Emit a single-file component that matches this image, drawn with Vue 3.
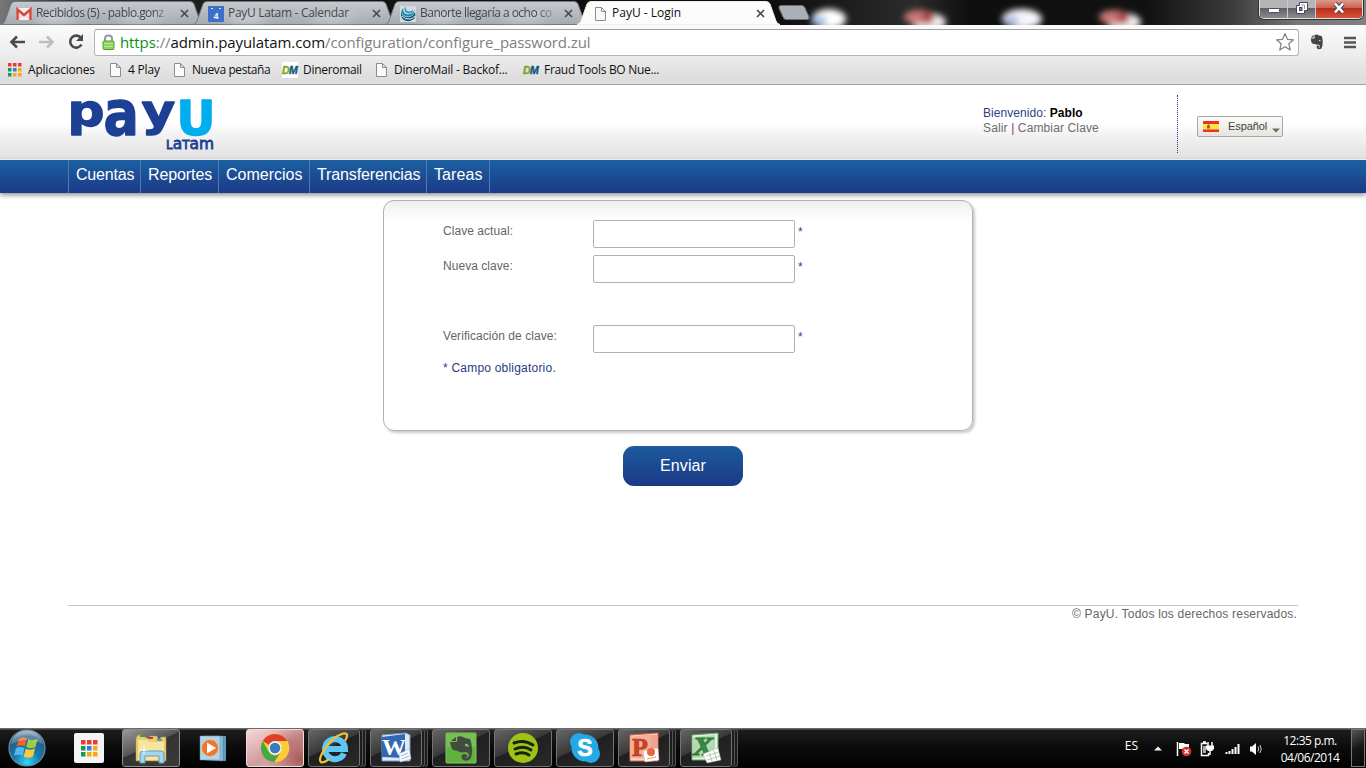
<script setup>
import { ref } from 'vue'

const tabs = [
  { title: 'Recibidos (5) - pablo.gonz', icon: 'gmail', cls: 't0' },
  { title: 'PayU Latam - Calendar', icon: 'calendar', cls: 't1' },
  { title: 'Banorte llegaría a ocho co', icon: 'globe', cls: 't2' },
  { title: 'PayU - Login', icon: 'page', cls: 't3', active: true },
]
const bookmarks = [
  { label: 'Aplicaciones', icon: 'apps', cls: 'b0' },
  { label: '4 Play', icon: 'page', cls: 'b1' },
  { label: 'Nueva pestaña', icon: 'page', cls: 'b2' },
  { label: 'Dineromail', icon: 'dmw', cls: 'b3' },
  { label: 'DineroMail - Backof...', icon: 'page', cls: 'b4' },
  { label: 'Fraud Tools BO Nue...', icon: 'dm', cls: 'b5' },
]
const menu = [
  { label: 'Cuentas', cls: 'm0' },
  { label: 'Reportes', cls: 'm1' },
  { label: 'Comercios', cls: 'm2' },
  { label: 'Transferencias', cls: 'm3' },
  { label: 'Tareas', cls: 'm4' },
]
const fields = ref([
  { label: 'Clave actual:', value: '' },
  { label: 'Nueva clave:', value: '' },
  { label: 'Verificación de clave:', value: '', spaced: true },
])
const tasks = [
  { id: 'launcher' },
  { id: 'explorer', open: true, lit: true },
  { id: 'player' },
  { id: 'chrome', open: true, active: true },
  { id: 'ie', open: true, stack: true },
  { id: 'word', open: true, stack: true },
  { id: 'evernote', open: true },
  { id: 'spotify', open: true },
  { id: 'skype', open: true },
  { id: 'ppt', open: true, stack: true },
  { id: 'excel', open: true, stack: true },
]
const dots = ['#ea3d2f', '#ea3d2f', '#ea3d2f', '#169b56', '#2a7de1', '#f6a912', '#169b56', '#f6a912', '#f6a912']
</script>

<template>
  <div class="screen">
    <div class="titlebar">
      <svg class="aero" width="1366" height="25" viewBox="0 0 1366 25">
        <defs>
          <linearGradient id="glass" x1="0" x2="1">
            <stop offset="0" stop-color="#777" /><stop offset=".05" stop-color="#333" /><stop offset=".2" stop-color="#141414" />
            <stop offset=".56" stop-color="#0c0c0c" /><stop offset=".67" stop-color="#2b2b2b" /><stop offset=".71" stop-color="#0e0e0e" />
            <stop offset=".84" stop-color="#111" /><stop offset=".9" stop-color="#3a3a3a" /><stop offset=".95" stop-color="#777" /><stop offset="1" stop-color="#808080" />
          </linearGradient>
          <filter id="soft" x="-30%" y="-50%" width="160%" height="200%"><feGaussianBlur stdDeviation="3" /></filter>
        </defs>
        <rect width="1366" height="25" fill="url(#glass)" />
        <g filter="url(#soft)">
          <ellipse cx="829" cy="19" rx="17" ry="10" fill="#fff" /><ellipse cx="819" cy="21" rx="8" ry="5" fill="#9dbfe4" />
          <ellipse cx="929" cy="22" rx="17" ry="9" fill="#f2eeee" /><ellipse cx="919" cy="17" rx="15" ry="7" fill="#c97878" /><ellipse cx="928" cy="18" rx="6" ry="6" fill="#b04040" />
          <ellipse cx="1022" cy="19" rx="20" ry="10" fill="#f5f6fb" /><ellipse cx="1011" cy="21" rx="8" ry="5" fill="#a9b6dd" />
          <ellipse cx="1124" cy="22" rx="17" ry="9" fill="#f2eeee" /><ellipse cx="1114" cy="17" rx="15" ry="7" fill="#c97878" /><ellipse cx="1123" cy="18" rx="6" ry="6" fill="#b04040" />
        </g>
      </svg>
      <div class="tabs">
        <div v-for="t in tabs" :key="t.title" class="tab" :class="[{ active: t.active }, t.cls]">
          <svg class="tabshape" width="205" height="25" viewBox="0 0 205 25">
            <defs>
              <linearGradient id="tg" x2="0" y2="1"><stop offset="0" stop-color="#c5cad0" /><stop offset="1" stop-color="#a6abb2" /></linearGradient>
              <filter id="tb"><feGaussianBlur stdDeviation="6" /></filter>
            </defs>
            <path d="M1 24.5Q4 24 5 21L11 4Q12 1.500 15 1.500H190Q193 1.500 194 4L200 21Q201 24 204 24.500Z" :fill="t.active ? '#fcfcfc' : 'url(#tg)'" :stroke="t.active ? '#eee' : '#74787e'" />
            <g v-if="!t.active" filter="url(#tb)" opacity=".45"><ellipse cx="55" cy="18" rx="20" ry="5" fill="#fff" /><ellipse cx="140" cy="17" rx="22" ry="5" fill="#eff4fa" /></g>
          </svg>
          <svg class="fav" width="16" height="16" viewBox="0 0 16 16">
            <g v-if="t.icon === 'gmail'"><rect y="2" width="16" height="12" rx="1" fill="#f4eeee" /><path d="M1.500 14V3.500L8 9L14.500 3.500V14" fill="none" stroke="#d54b3f" stroke-width="2.600" /><path d="M3 13L6 9M13 13L10 9" stroke="#ccc" /></g>
            <g v-else-if="t.icon === 'calendar'"><rect width="16" height="16" rx="1" fill="#3d6fc8" /><path d="M3 2.500H5M11 2.500H13" stroke="#dce7fa" /><text x="8" y="12.500" text-anchor="middle" font-size="9" font-weight="700" font-family="Open Sans" fill="#e5eefb">4</text></g>
            <g v-else-if="t.icon === 'globe'"><rect width="16" height="16" fill="#d4dade" /><path d="M1 5Q2 11 8 11Q13 11 15 6Q17 13 10 15Q2 16 1 9Z" fill="#165d7c" /><path d="M3 2Q3 8 8 8.500Q13 8 14.500 4Q14 10.500 8 10.500Q2 10 1.500 5Z" fill="#1c87b4" /><path d="M6 1Q5 5 9 5.500Q13 5 13 3Q14 7 9 7.500Q4 7 4.500 2Z" fill="#2b9cc8" /><path d="M2 10Q5 13.500 10 13Q13 12.500 15 10" fill="none" stroke="#d8e8ee" /></g>
            <path v-else d="M3.500 1.500H9.500L13.500 5.500V14.500H3.500ZM9.500 1.500V5.500H13.500" fill="#f8f8f8" stroke="#8d8d8d" />
          </svg>
          <span class="tabtitle">{{ t.title }}</span>
          <svg class="x" width="9" height="9" viewBox="0 0 9 9"><path d="M1 1L8 8M8 1L1 8" stroke="#4c4c4c" stroke-width="1.700" /></svg>
        </div>
        <svg class="newtab" width="34" height="16" viewBox="0 0 34 16"><path d="M4 .5H25Q27 .5 28 3L32 12Q32.500 14.500 30 14.500H9Q7 14.500 6 12L2 3Q1.500 .5 4 .5Z" fill="#aab0b8" stroke="#6c7075" /></svg>
      </div>
      <div class="winbtns">
        <span class="wb min"><svg width="14" height="12"><rect x="1.500" y="6.500" width="11" height="4" rx="1" fill="#fff" stroke="#4d5065" /></svg></span>
        <span class="wb"><svg width="14" height="14"><path d="M4.500 1.500H12.500V9.500H9.500V12.500H1.500V4.500H4.500Z" fill="#fff" stroke="#454860" /><rect x="4.500" y="6.500" width="2.500" height="3" fill="#7d7f8d" stroke="#454860" /><path d="M6 4H9.500V8" fill="none" stroke="#999" /></svg></span>
        <span class="wb close"><svg width="14" height="12" viewBox="0 0 14 12"><path d="M3 1.500L11 10.500M11 1.500L3 10.500" stroke="#4c4353" stroke-width="4.500" /><path d="M3 1.500L11 10.500M11 1.500L3 10.500" stroke="#fff" stroke-width="2.600" /></svg></span>
      </div>
    </div>

    <div class="chrome">
      <div class="toolbar">
        <svg class="back" width="18" height="16" viewBox="0 0 18 16"><path d="M17 8H4M9 2.500L3.500 8L9 13.500" fill="none" stroke="#4b4b4b" stroke-width="2.600" /></svg>
        <svg class="fwd" width="18" height="16" viewBox="0 0 18 16"><path d="M1 8H14M9 2.500L14.500 8L9 13.500" fill="none" stroke="#bebebe" stroke-width="2.600" /></svg>
        <svg class="reload" width="18" height="18" viewBox="0 0 18 18"><path d="M14 5A6 6 0 1 0 14.500 11.500" fill="none" stroke="#4b4b4b" stroke-width="2.600" /><path d="M16 1V8H9Z" fill="#4b4b4b" /></svg>
        <div class="omnibox">
          <svg class="lock" width="13" height="17" viewBox="0 0 13 17"><path d="M3 8V4.500Q3 1.500 6.500 1.500Q10 1.500 10 4.500V8" fill="none" stroke="#999" stroke-width="2" /><rect x="1" y="7" width="11" height="8.500" rx="1" fill="#8ed35c" stroke="#52a032" /><path d="M2 9.500H11M2 12.500H11" stroke="#b4e78f" /></svg>
          <span class="url"><i>https</i>://<b>admin.payulatam.com</b>/configuration/configure_password.zul</span>
          <svg class="star" width="20" height="20" viewBox="0 0 20 20"><path d="M10 1.500L12.400 7.300L18.500 7.800L13.800 11.800L15.300 18L10 14.700L4.700 18L6.200 11.800L1.500 7.800L7.600 7.300Z" fill="#fff" stroke="#808080" stroke-width="1.200" stroke-linejoin="round" /></svg>
        </div>
        <svg class="ever" width="14" height="16" viewBox="0 0 14 16"><path d="M4.500 1Q7 0 9 1.500L11.500 2Q12.500 3 12.700 7Q12.900 12 11.500 14.500Q9 16 7 14.500Q5.800 12.600 7.500 11.500L9.400 11.800V13H8.300Q9 14 10 13.200Q10.500 11 8.500 10.500Q6.500 11 5.500 10.300L2.200 9.500Q1 8 .8 4.500H4.500Z" fill="#444" /><path d="M.8 3.600L3.700 .7V3.600Z" fill="#555" /><path d="M9 6Q10.500 5.500 10.800 7.300L9 7Z" fill="#ddd" /></svg>
        <svg class="burger" width="14" height="13"><path d="M1 2H13M1 6.500H13M1 11H13" stroke="#555" stroke-width="2.400" /></svg>
      </div>
      <div class="bookmarks">
        <div v-for="b in bookmarks" :key="b.label" class="bm" :class="b.cls">
          <svg width="16" height="16" viewBox="0 0 16 16">
            <g v-if="b.icon === 'apps'"><rect v-for="(c, i) in dots" :key="i" :x="1 + (i % 3) * 5" :y="1 + Math.floor(i / 3) * 5" width="3.500" height="3.500" :fill="c" /></g>
            <path v-else-if="b.icon === 'page'" d="M3.500 1.500H9.500L13.500 5.500V14.500H3.500ZM9.500 1.500V5.500H13.500" fill="#fbfbfb" stroke="#8d8d8d" />
            <g v-else><rect v-if="b.icon === 'dmw'" width="16" height="16" fill="#fff" /><text y="12" font-family="Liberation Sans" font-size="10.500" font-weight="700" font-style="italic" stroke-width=".4"><tspan fill="#79a820" stroke="#79a820">D</tspan><tspan x="7" fill="#19537a" stroke="#19537a">M</tspan></text></g>
          </svg>
          <span>{{ b.label }}</span>
        </div>
      </div>
    </div>

    <main class="page">
      <header class="head">
        <div class="wrap headrow">
          <svg class="logo" width="150" height="60" viewBox="0 0 150 60" font-family="DejaVu Sans" font-weight="700" fill="#1d3f94">
            <g stroke="#1d3f94" stroke-width="1.400" stroke-linejoin="round">
              <text transform="translate(-1.500 31.500) scale(1.100 .96)" font-size="47">p</text>
              <text transform="translate(34.500 40.500) scale(.82 .96)" font-size="64">a</text>
              <text transform="translate(72.500 31.500) scale(1.100 .96)" font-size="47">y</text>
              <text transform="translate(107.500 40.500) scale(.98 .98)" font-size="49" fill="#00aeef" stroke="#00aeef">U</text>
            </g>
            <text x="97" y="55" font-size="12.500" textLength="48" lengthAdjust="spacingAndGlyphs" font-weight="400" stroke="#1d3f94" stroke-width=".8">L<tspan font-size="16">a</tspan>T<tspan font-size="16">am</tspan></text>
          </svg>
          <div class="user">
            <p>Bienvenido: <b>Pablo</b></p>
            <p class="links"><a>Salir</a> <em>|</em> <a>Cambiar Clave</a></p>
          </div>
          <div class="dots"></div>
          <button class="lang">
            <svg width="16" height="11" viewBox="0 0 16 11"><rect width="16" height="11" fill="#e8322c" /><rect y="3" width="16" height="5.500" fill="#fbe33a" /><path d="M4 7.500V5L5.500 3L7 5V7.500Z" fill="#b05a2a" /></svg>
            <span>Español</span>
            <svg class="caret" width="8" height="5"><path d="M0 .5H8L4 4.500Z" fill="#6d6d5e" /></svg>
          </button>
        </div>
      </header>
      <nav class="nav"><div class="wrap navrow"><a v-for="m in menu" :key="m.label" :class="m.cls">{{ m.label }}</a></div></nav>

      <section class="card">
        <div v-for="f in fields" :key="f.label" class="field" :class="{ spaced: f.spaced }">
          <label>{{ f.label }}</label><input v-model="f.value" type="password" /><span>*</span>
        </div>
        <p class="note">* Campo obligatorio.</p>
      </section>
      <button class="send">Enviar</button>
      <footer class="wrap foot"><span>© PayU. Todos los derechos reservados.</span></footer>
    </main>

    <div class="taskbar">
      <svg class="start" width="42" height="40" viewBox="0 0 42 40">
        <defs><radialGradient id="orb" cx=".5" cy=".9" r=".9"><stop offset="0" stop-color="#35d7f5" /><stop offset=".4" stop-color="#147bad" /><stop offset=".8" stop-color="#2a5a84" /><stop offset="1" stop-color="#b8cfdf" /></radialGradient></defs>
        <circle cx="21" cy="20" r="18" fill="url(#orb)" stroke="#678ba3" stroke-width="1.200" />
        <path d="M13 11Q17 8 21 10.500L19 18.500Q15 16 10.500 18.500Z" fill="#f0622b" /><path d="M22.200 11.200Q26.500 13.500 31.500 11L29.500 19Q24.500 21.500 20.200 19Z" fill="#9ccf45" />
        <path d="M10 20.200Q14.500 17.700 18.500 20.200L16.500 28Q12.500 25.500 8 28Z" fill="#55b7ea" /><path d="M19.800 20.800Q24 23 29 20.600L27 28.500Q22 31 17.700 28.600Z" fill="#fdca3b" />
        <path d="M5 16Q8 4 21 4Q34 4 37 16Q21 8 5 16Z" fill="#fff" opacity=".25" />
      </svg>
      <div class="tasks">
        <div v-for="t in tasks" :key="t.id" class="slot">
          <div class="task" :class="{ open: t.open, lit: t.lit, active: t.active }">
            <svg width="32" height="32" viewBox="0 0 32 32">
              <g v-if="t.id === 'launcher'"><rect x="1" y="1" width="30" height="30" rx="2" fill="#f4f4f4" /><rect v-for="(c, i) in dots" :key="i" :x="8 + (i % 3) * 6" :y="8 + Math.floor(i / 3) * 6" width="4.500" height="4.500" :fill="c" /></g>
              <g v-else-if="t.id === 'explorer'"><path d="M1 6L3 3H9L11 6H14L15 4H22L23 7H25L26 5H31V29H1Z" fill="#e9cd75" stroke="#b08e3b" stroke-width=".6" /><path d="M5 3H10V5H5Z" fill="#26a651" /><path d="M13 5H18V7H13Z" fill="#c03c2c" /><path d="M22 7H27V9H22Z" fill="#3ba5df" /><path d="M1 8H12L14 10H31V28H1Z" fill="#f8e59b" /><path d="M1 8H3V28H1ZM31 10V28H29V10Z" fill="#e3c669" /><path d="M5 31V22Q5 19 8 19H26Q29 19 29 22V31H24V24H10V31Z" fill="#a5d5ee" stroke="#5d9fc5" /><path d="M9 14V22M5 18H13" stroke="#fff" /></g>
              <g v-else-if="t.id === 'player'"><path d="M12 4L29 4V29L12 28Z" fill="#5d9cbc" /><path d="M8 4L26 4V29L8 28Z" fill="#8bbdd6" stroke="#4b839f" stroke-width=".5" /><path d="M3 4H23V28H3Z" fill="#b2d4e5" stroke="#5e93af" stroke-width=".5" /><circle cx="13" cy="16" r="8.500" fill="#ee7726" stroke="#cfc8be" /><path d="M10 10.500L19 16L10 21.500Z" fill="#fff" /></g>
              <g v-else-if="t.id === 'chrome'"><circle cx="16" cy="16" r="14.300" fill="#fc3" /><path d="M3.700 9A14.300 14.300 0 0 1 28.300 9H16A7 7 0 0 0 10 13Z" fill="#dd3e2e" /><path d="M3.700 9A14.300 14.300 0 0 0 15 30.300L22 20A7 7 0 0 1 10 20Z" fill="#43a848" /><circle cx="16" cy="16" r="6.700" fill="#f4f6f7" /><circle cx="16" cy="16" r="5.300" fill="#397bc1" /></g>
              <g v-else-if="t.id === 'ie'"><path d="M26 21.500A10 10 0 1 1 27 17H10" fill="none" stroke="#5dc8f3" stroke-width="6" /><path d="M27 9Q32 0 25 1.500Q14 5 6 18Q0 28 3 30Q5 31.500 11 27" fill="none" stroke="#f5c12c" stroke-width="2.300" /></g>
              <g v-else-if="t.id === 'word'"><path d="M2 3L26 1L30 3V29H2Z" fill="#dfeaf6" stroke="#6f9ac8" /><path d="M2 5L25 2V26L2 25Z" fill="#3268b2" /><text x="2" y="23" font-family="Liberation Serif" font-weight="700" font-size="24" textLength="24" lengthAdjust="spacingAndGlyphs" fill="#fff">W</text><path d="M19 22L29 17L31 27L20 30Z" fill="#f7fafc" stroke="#a9bdd0" stroke-width=".5" /><path d="M21 24L28 21M22 27L29 24" stroke="#a3bbd2" /></g>
              <g v-else-if="t.id === 'evernote'"><rect x="1" y="1" width="30" height="30" rx="1" fill="#62b13c" stroke="#80c862" /><rect x="2" y="2" width="28" height="13" fill="#88ca64" opacity=".6" /><path d="M12 5Q16 3 20 6L25 7Q27 11 27 19Q27 26 24 28Q20 30 17 27Q15 23 19 22L22 23V25H20Q22 27 24 24Q24 20 20 20Q15 21 13 19L8 18Q6 16 5 10H11Q13 10 12 5ZM6 9L11 5V9Z" fill="#424b40" /><path d="M20 12Q23 11 24 15L20 14Z" fill="#7dc158" /></g>
              <g v-else-if="t.id === 'spotify'"><circle cx="16" cy="16" r="15" fill="#9dc412" /><path d="M7 11Q17 7 26 13M8 17Q17 13 24 18M9 22Q17 19 22 23" fill="none" stroke="#1b210c" stroke-width="3" stroke-linecap="round" /></g>
              <g v-else-if="t.id === 'skype'"><circle cx="10" cy="10" r="9" fill="#23a9e5" /><circle cx="22" cy="22" r="9" fill="#23a9e5" /><circle cx="16" cy="16" r="13.500" fill="#23a9e5" /><text x="16" y="24" text-anchor="middle" font-family="Liberation Sans" font-weight="700" font-size="23" stroke="#fff" stroke-width=".6" fill="#fff">S</text></g>
              <g v-else-if="t.id === 'ppt'"><path d="M2 3L30 1V29H2Z" fill="#f8d6c9" stroke="#d86546" /><path d="M23 3H29V16H23Z" fill="#eda58f" /><path d="M2 5L23 2V27L2 26Z" fill="#f2b09a" /><text x="4" y="24" font-family="Liberation Serif" font-weight="700" font-size="26" stroke="#b93a1a" stroke-width=".7" fill="#c94420">P</text><path d="M15 19L30 16L31 28L17 30Z" fill="#fff" stroke="#dca794" stroke-width=".5" /><circle cx="23" cy="20" r="4" fill="#e4673f" /><path d="M19 27L28 25" stroke="#df9d86" /></g>
              <g v-else><path d="M2 3L28 1V28H2Z" fill="#e5f2e2" stroke="#65a66a" /><path d="M3 5L25 3V25L3 26Z" fill="#b5d9b2" /><text x="3" y="23" font-family="Liberation Serif" font-weight="700" font-style="italic" font-size="26" textLength="20" lengthAdjust="spacingAndGlyphs" stroke="#2f7c39" fill="#398c43">X</text><path d="M13 22L28 16L31 28L17 31Z" fill="#fff" stroke="#9fb89c" stroke-width=".5" /><path d="M16 24L29 20M17 28L30 24M19 21L22 29M24 19L27 28" stroke="#a5bba3" stroke-width=".8" /></g>
            </svg>
          </div>
          <template v-if="t.stack"><i class="edge"></i><i class="edge"></i></template>
        </div>
      </div>
      <div class="tray">
        <span class="es">ES</span>
        <svg class="up" width="8" height="5"><path d="M0 4.500L4 .5L8 4.500Z" fill="#f2f2f2" /></svg>
        <svg class="flag" width="17" height="16" viewBox="0 0 17 16"><path d="M1.500 1V15" stroke="#fff" stroke-width="1.500" /><path d="M3 2H8L9 3H13V9H8L7 8H3Z" fill="#fff" /><circle cx="10.500" cy="10.500" r="4.800" fill="#d9302b" /><path d="M8.500 8.500L12.500 12.500M12.500 8.500L8.500 12.500" stroke="#fff" stroke-width="1.500" /></svg>
        <svg class="plug" width="15" height="16" viewBox="0 0 15 16"><path d="M7 2.500H1.500V14.500H8.500V12M3 1H6" fill="none" stroke="#fff" stroke-width="1.500" /><path d="M3 5H6V12H3Z" fill="#aaa" /><path d="M8 1V5M12 1V5M10 9V14" stroke="#fff" stroke-width="1.500" /><path d="M6 4.500H14V8L12 10H8L6 8Z" fill="#fff" /></svg>
        <svg class="bars" width="15" height="12"><path d="M1.500 9V11M4.500 8V11M7.500 6V11M10.500 4V11M13.500 1V11" stroke="#fff" stroke-width="2" /></svg>
        <svg class="vol" width="15" height="14" viewBox="0 0 15 14"><path d="M1 4.500H3L7 1V13L3 9.500H1Z" fill="#fff" /><path d="M9 4.500Q10.500 7 9 9.500M11 3Q13.500 7 11 11" fill="none" stroke="#ccc" /></svg>
        <div class="clock"><span class="time">12:35 p.m.</span><span>04/06/2014</span></div>
        <div class="peek"></div>
      </div>
    </div>
  </div>
</template>

<style>
html, body { margin: 0; overflow: hidden; }
</style>
<style scoped>
* { box-sizing: border-box; }
p { margin: 0; }
svg { display: block; flex: none; overflow: visible; }
.screen { width: 1366px; height: 768px; display: flex; flex-direction: column; overflow: hidden; font-family: "Liberation Sans", Arial, sans-serif; background: #fff; }
.titlebar { position: relative; height: 25px; flex: none; display: flex; justify-content: space-between; overflow: hidden; }
.aero { position: absolute; left: 0; top: 0; }
.tabs { position: relative; display: flex; height: 25px; font: 12px/22px "Open Sans", "Noto Sans", sans-serif; color: #474747; }
.tab { position: relative; width: 192px; height: 25px; padding: 1px 0 0 16px; display: flex; align-items: center; white-space: nowrap; }
.tab.active { color: #111; z-index: 2; }
.tabshape { position: absolute; left: 0; top: 0; }
.fav, .tabtitle, .x { position: relative; }
.fav { margin-top: 2px; }
.tabtitle { width: 140px; margin-left: 4px; }
.t0 .tabtitle { letter-spacing: -.56px; mask-image: linear-gradient(90deg, #000 83%, transparent); }
.t1 .tabtitle { letter-spacing: -.3px; }
.t2 .tabtitle { letter-spacing: -.52px; mask-image: linear-gradient(90deg, #000 83%, transparent); }
.x { margin: 1px 0 0 4px; }
.newtab { margin: 5px 0 0 9px; }
.winbtns { position: relative; display: flex; width: 104px; height: 19px; margin-right: 3px; border: 1px solid #e0e0e0; border-top: 0; border-radius: 0 0 5px 5px; overflow: hidden; box-shadow: 0 0 0 1px #333; }
.wb { width: 28px; display: flex; align-items: center; justify-content: center; padding-bottom: 3px; border-right: 1px solid #ccc; background: linear-gradient(#b4b4b4 0 44%, #5f5f65 46%, #8c8c90); }
.wb.close { flex: 1; border: 0; background: linear-gradient(#dd9a8b 0, #ca6250 44%, #b62e16 46%, #d8543b); }
.chrome { height: 60px; flex: none; background: linear-gradient(#fbfbfb, #ededed 30px, #dedede 52px); border-bottom: 1px solid #a3a3a3; }
.toolbar { height: 31px; display: flex; align-items: center; padding: 3px 0 0 8px; }
.fwd { margin-left: 12px; }
.reload { margin-left: 11px; }
.omnibox { width: 1205px; height: 27px; margin-left: 9px; border: 1px solid #b4b4b4; border-top-color: #a0a0a0; border-radius: 3px; background: #fff; display: flex; align-items: center; padding: 0 3px 0 7px; }
.url { flex: 1; margin-left: 5px; white-space: nowrap; font: 15px/24px "Open Sans", "Noto Sans", sans-serif; letter-spacing: -.09px; color: #808080; }
.url i { color: #0b8f17; font-style: normal; }
.url b { color: #111; font-weight: 400; }
.ever { margin-left: 11px; }
.burger { margin-left: 19px; }
.bookmarks { height: 28px; display: flex; align-items: center; padding-left: 7px; font: 12px/18px "Open Sans", "Noto Sans", sans-serif; color: #111; }
.bm { display: flex; align-items: center; gap: 5px; white-space: nowrap; flex: none; }
.b0 { width: 100px; letter-spacing: -.2px; }
.b1 { width: 64px; letter-spacing: -.2px; }
.b2 { width: 111px; letter-spacing: -.42px; }
.b3 { width: 91px; letter-spacing: -.3px; }
.b4 { width: 150px; letter-spacing: -.24px; }
.b5 { letter-spacing: -.3px; }
.page { height: 643px; flex: none; display: flex; flex-direction: column; align-items: stretch; background: #fff; font-size: 12px; }
.wrap { width: 1230px; margin: 0 auto; }
.head { height: 75px; flex: none; background: linear-gradient(#fff 38px, #f4f4f4 48px, #e1e1e1 74px); border-bottom: 1px solid #fff; }
.headrow { display: flex; align-items: flex-start; }
.logo { margin: 9px 0 0 1px; }
.user { margin: 21px 0 0 764px; width: 194px; line-height: 15px; color: #2d3f86; white-space: nowrap; letter-spacing: .06px; }
.user b { color: #000; }
.links { color: #6d6d6d; letter-spacing: .13px; }
.links em { font-style: normal; color: #7e3294; }
.dots { margin-top: 10px; height: 58px; border-left: 1px dotted #223c8c; }
.lang { margin: 31px 0 0 19px; width: 86px; height: 21px; border: 1px solid #aaa89e; border-radius: 2px; padding: 0 2px 0 5px; display: flex; align-items: center; background: linear-gradient(#fcfcfb, #e5e4df); font: 11px "Liberation Sans", sans-serif; color: #444; }
.lang span { margin: -1px 0 0 9px; width: 39px; letter-spacing: -.1px; }
.caret { margin: 7px 0 0 5px; }
.nav { height: 33px; flex: none; background: linear-gradient(#1b60a2, #1c3a87); box-shadow: 0 2px 5px rgba(0, 0, 0, .45); }
.navrow { display: flex; height: 33px; border-left: 1px solid #4f7cb4; font-size: 16px; line-height: 29px; color: #fff; }
.navrow a { padding-left: 7px; border-right: 1px solid #4f7cb4; white-space: nowrap; }
.m0 { width: 72px; letter-spacing: -.2px; }
.m1 { width: 78px; letter-spacing: -.1px; }
.m2 { width: 91px; }
.m3 { width: 117px; letter-spacing: -.13px; }
.m4 { width: 63px; letter-spacing: .1px; }
.card { width: 590px; height: 231px; margin: 7px 0 0 383px; padding: 19px 0 0 59px; border: 1px solid #b1b1b1; border-radius: 11px; background: linear-gradient(#eee, #fff 19px); box-shadow: 2px 2px 3px rgba(0, 0, 0, .22); flex: none; color: #666; }
.field { display: flex; height: 28px; margin-bottom: 7px; }
.field.spaced { margin-top: 42px; }
.field label { width: 150px; line-height: 22px; letter-spacing: .05px; }
.field input { width: 202px; height: 28px; margin: 0; border: 1px solid #b1b1b1; border-radius: 2px; background: #fff; padding: 4px; outline: 0; }
.field span { margin-left: 3px; line-height: 25px; color: #334585; }
.note { color: #293b82; line-height: 16px; letter-spacing: .21px; }
.send { width: 120px; height: 40px; margin: 15px 0 0 623px; padding: 0; border: 0; border-radius: 11px; background: linear-gradient(#1c5b9d, #1c3986); color: #fff; font: 16px "Liberation Sans", sans-serif; letter-spacing: .1px; flex: none; }
.foot { margin-top: 119px; border-top: 1px solid #c5c5c5; height: 20px; text-align: right; line-height: 16px; color: #666; padding-right: 1px; letter-spacing: .2px; }
.taskbar { height: 40px; flex: none; display: flex; background: linear-gradient(#6a6a6a 0 1px, #1d1d1d 2px, #0b0b0b 20px, #000); }
.start { margin: 0 12px 0 6px; }
.tasks { display: flex; gap: 4px; }
.slot { width: 58px; height: 40px; display: flex; padding: 1px 0; }
.task { flex: 1; display: flex; align-items: center; justify-content: center; border: 1px solid transparent; border-radius: 3px; }
.task.open { border-color: #737373; background: linear-gradient(155deg, #666 0, #393939 44%, #202020 46%, #292929); }
.task.open.lit { border-color: #8f8f8f; background: linear-gradient(155deg, #999 0, #555 44%, #333 46%, #3a3a3a); }
.task.open.active { border-color: #f5dada; background: radial-gradient(circle at 95% 80%, #a95b5b, transparent 60%), linear-gradient(150deg, #f6d8d8, #d29b9b 55%, #eec4c4); }
.edge { width: 3px; border: solid #555; border-width: 1px 1px 1px 0; border-radius: 0 3px 3px 0; background: #1c1c1c; }
.tray { margin-left: auto; display: flex; color: #fff; font: 12px/17px "Open Sans", "Noto Sans", sans-serif; }
.es { margin: 9px 16px 0 0; font-size: 12px; }
.up { margin: 18px 14px 0 0; }
.flag { margin: 13px 7px 0 0; }
.plug { margin: 13px 10px 0 0; }
.bars { margin: 15px 9px 0 0; }
.vol { margin: 14px 17px 0 0; }
.clock { width: 58px; display: flex; flex-direction: column; align-items: center; padding-top: 4px; white-space: nowrap; font-size: 12px; letter-spacing: -.5px; }
.peek { margin: 1px 1px 0 12px; width: 14px; height: 38px; border: 1px solid #777; background: linear-gradient(155deg, #555, #161616 50%, #080808); }
</style>
